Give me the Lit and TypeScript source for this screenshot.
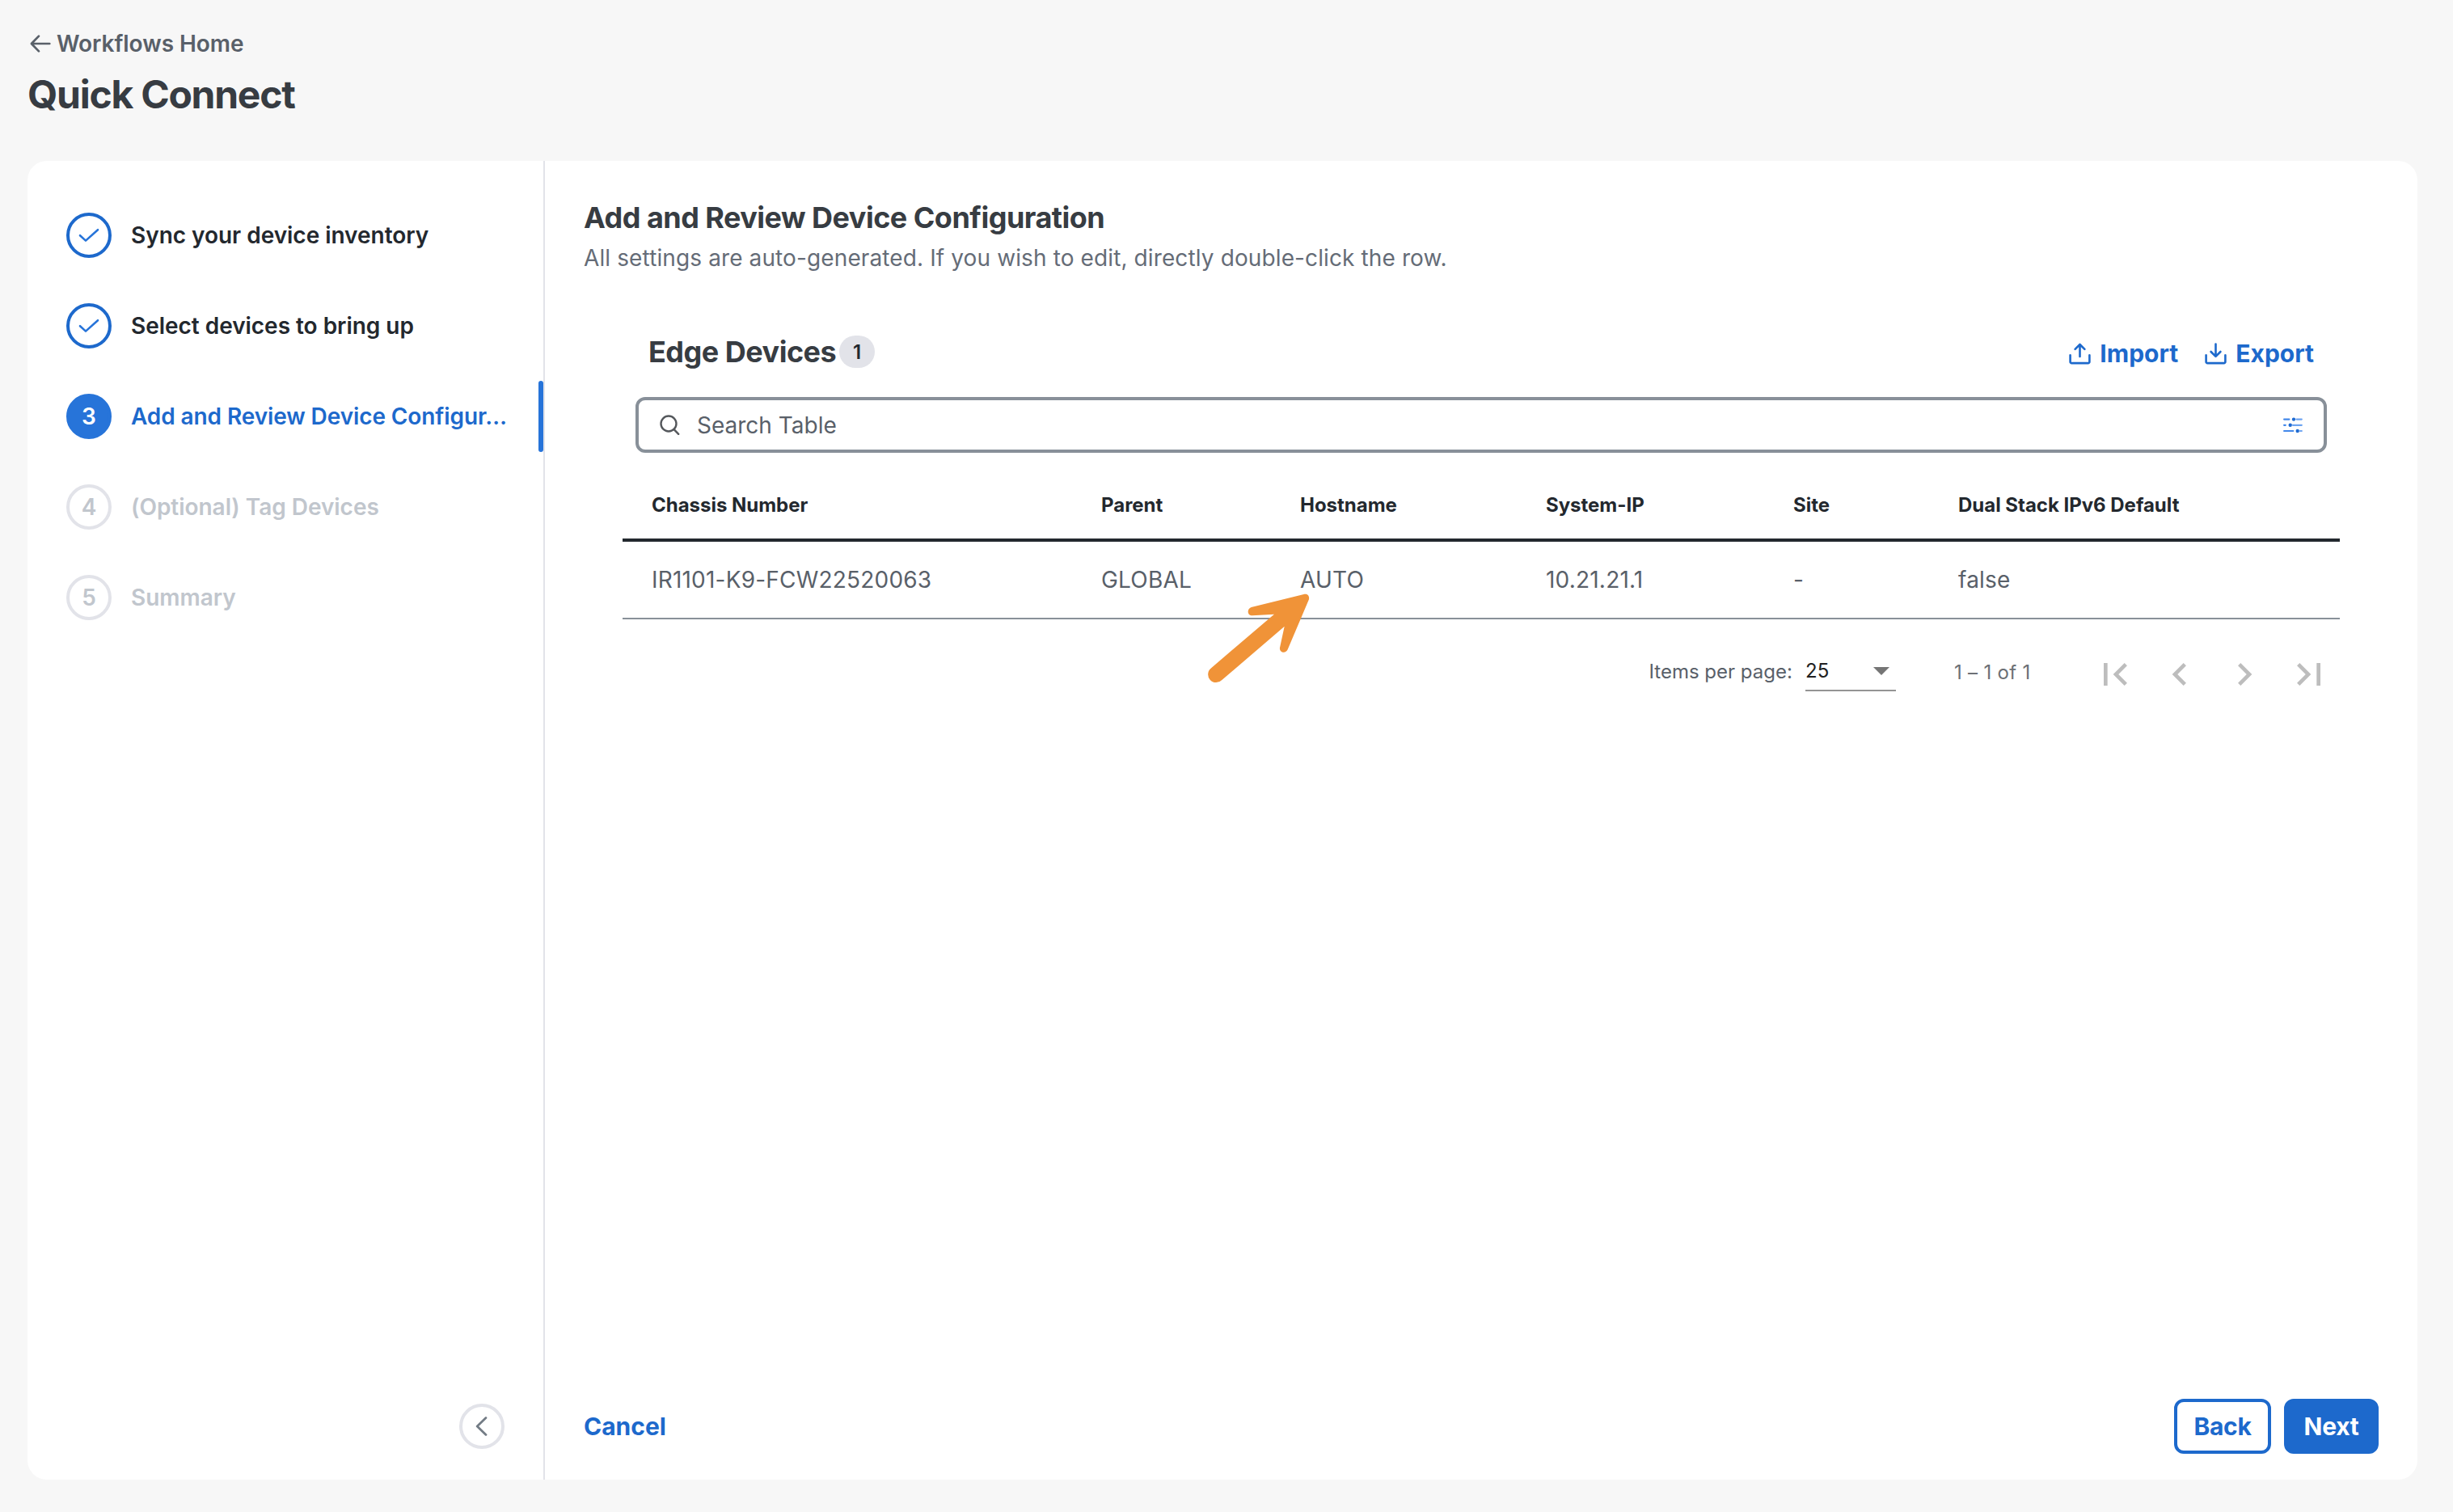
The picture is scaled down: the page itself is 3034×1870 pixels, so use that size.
import { LitElement, html, css, svg, nothing } from "lit";

type StepState = "done" | "active" | "pending";

interface Step {
  label: string;
  state: StepState;
}

const STEPS: Step[] = [
  { label: "Sync your device inventory", state: "done" },
  { label: "Select devices to bring up", state: "done" },
  { label: "Add and Review Device Configur…", state: "active" },
  { label: "(Optional) Tag Devices", state: "pending" },
  { label: "Summary", state: "pending" },
];

const COLUMNS = ["Chassis Number", "Parent", "Hostname", "System-IP", "Site", "Dual Stack IPv6 Default"];
const ROWS = [["IR1101-K9-FCW22520063", "GLOBAL", "AUTO", "10.21.21.1", "-", "false"]];

const PAGE_ICONS = [
  "M18.41 16.59L13.82 12l4.59-4.59L17 6l-6 6 6 6zM6 6h2v12H6z",
  "M15.41 7.41L14 6l-6 6 6 6 1.41-1.41L10.83 12z",
  "M10 6L8.59 7.41 13.17 12l-4.58 4.59L10 18l6-6z",
  "M5.59 7.41L10.18 12l-4.59 4.59L7 18l6-6-6-6zM16 6h2v12h-2z",
];

class StepList extends LitElement {
  static styles = css`
    :host { display: block; }
    .step { display: flex; align-items: center; height: 112px; padding-left: 48px; }
    .bullet {
      box-sizing: border-box; width: 56px; height: 56px; flex: none; border-radius: 50%;
      display: flex; align-items: center; justify-content: center;
      border: 4px solid #e2e3e9; color: #c1c6cd;
    }
    .label { flex: none; width: 474px; margin-left: 24px; white-space: nowrap; color: #c1c6cd; line-height: 40px; }
    .done .bullet { border-color: #1d69cc; }
    .done .label { color: #23282e; }
    .active .bullet { background: #2774d9; border-color: #2774d9; color: #fff; }
    .active .label { color: #1d69cc; letter-spacing: -0.1px; }
    .marker { width: 6px; height: 88px; margin-left: auto; border-radius: 3px; background: #2774d9; }
  `;

  render() {
    return STEPS.map(
      (s, i) => html`<div class="step ${s.state}">
        <div class="bullet">
          ${s.state === "done"
            ? html`<svg width="26" height="18" viewBox="0 0 26 18" fill="none" stroke="#2774d9" stroke-width="2.6" stroke-linecap="round" stroke-linejoin="round"><path d="M2 9.2l7 6.4L24 2.2" /></svg>`
            : i + 1}
        </div>
        <div class="label">${s.label}</div>
        ${s.state === "active" ? html`<div class="marker"></div>` : nothing}
      </div>`
    );
  }
}
customElements.define("step-list", StepList);

class DeviceTable extends LitElement {
  static styles = css`
    :host { display: block; }
    .toolbar { display: flex; align-items: center; height: 60px; margin-left: 32px; margin-right: 32px; }
    .title { width: 231px; white-space: nowrap; font-size: 36px; font-weight: 700; letter-spacing: -0.5px; color: #373c42; }
    .count {
      width: 44px; height: 40px; margin-left: 5px; border-radius: 20px; background: #e2e3e9;
      color: #23282e; font-size: 24px; font-weight: 600; line-height: 41px; text-align: center;
    }
    .actions { display: flex; gap: 33px; margin-left: auto; padding-top: 4px; }
    .action { display: flex; align-items: center; gap: 11px; color: #1d69cc; font-size: 30px; font-weight: 700; line-height: 36px; }
    .search {
      box-sizing: border-box; height: 69px; margin: 26px 16px 0; padding: 0 26px;
      display: flex; align-items: center; border: 4px solid #889099; border-radius: 12px;
    }
    .placeholder { flex: 1; margin-left: 21px; color: #596069; line-height: 36px; }
    .grid { display: grid; grid-template-columns: 556px 246px 304px 306px 204px 1fr; padding-left: 36px; align-items: center; }
    .head { box-sizing: border-box; height: 110px; padding-top: 23px; border-bottom: 4px solid #23282e; }
    .th { font-size: 24px; font-weight: 700; color: #23282e; letter-spacing: -0.02px; line-height: 32px; white-space: nowrap; }
    .row { height: 94px; border-bottom: 2px solid #889099; }
    .td { color: #596069; letter-spacing: 0.2px; line-height: 36px; }
    .pager { display: flex; align-items: center; height: 80px; margin-top: 28px; padding-left: 1269.5px; color: #596069; font-size: 24px; }
    .pager-label { width: 193.5px; padding-bottom: 7px; white-space: nowrap; }
    .select {
      box-sizing: border-box; width: 112px; height: 49px; display: flex; align-items: center;
      justify-content: space-between; padding-right: 8px; margin-top: -7px;
      border-bottom: 2px solid #949494; color: #212121;
    }
    .range { flex: none; width: 159px; margin-left: 72px; padding-bottom: 6px; color: #6c7075; letter-spacing: 0.3px; white-space: nowrap; }
    .pages { display: flex; margin-right: -2px; }
    .page { flex: none; width: 80px; height: 80px; display: flex; align-items: center; justify-content: center; }
  `;

  private arrowIcon(up: boolean) {
    return html`<svg width="27" height="27" viewBox="0 0 27 27" fill="none" stroke="currentColor" stroke-width="2.6" stroke-linecap="round" stroke-linejoin="round">
      <path d="M1.6 15.2v8.2a1.7 1.7 0 0 0 1.7 1.7h20.4a1.7 1.7 0 0 0 1.7-1.7v-8.2" />
      ${up ? svg`<path d="M13.5 17V2M7.6 7.9L13.5 2l5.9 5.9" />` : svg`<path d="M13.5 1.6v15.2M7.6 11l5.9 5.9L19.4 11" />`}
    </svg>`;
  }

  render() {
    return html`
      <div class="toolbar">
        <div class="title">Edge Devices</div>
        <div class="count">1</div>
        <div class="actions">
          <div class="action">${this.arrowIcon(true)}<span>Import</span></div>
          <div class="action">${this.arrowIcon(false)}<span>Export</span></div>
        </div>
      </div>
      <div class="search">
        <svg width="25" height="25" viewBox="0 0 25 25" fill="none" stroke="#55585c" stroke-width="2.4" stroke-linecap="round">
          <circle cx="11" cy="11" r="9.5" /><path d="M17.4 17.8l5.8 6" />
        </svg>
        <div class="placeholder">Search Table</div>
        <svg width="24" height="20" viewBox="0 0 24 20" fill="none" stroke-width="2.2" stroke-linecap="round">
          <path stroke="#4388ea" d="M1.1 2.6h6.3M1.1 9.8h1.7M1.1 17h11.2" />
          <path stroke="#6ea4f1" d="M16.5 2.6h6.3M12 9.8h10.8M21 17h1.8" />
          <g fill="#1f6bd2"><circle cx="13" cy="2.6" r="2.2" /><circle cx="8.7" cy="9.8" r="2.2" /><circle cx="17.7" cy="17" r="2.2" /></g>
        </svg>
      </div>
      <div class="grid head">${COLUMNS.map((c) => html`<div class="th">${c}</div>`)}</div>
      ${ROWS.map((r) => html`<div class="grid row">${r.map((c) => html`<div class="td">${c}</div>`)}</div>`)}
      <div class="pager">
        <div class="pager-label">Items per page:</div>
        <div class="select">
          <span>25</span>
          <svg width="20" height="10" viewBox="0 0 20 10"><path d="M0 0h20L10 10z" fill="#757575" /></svg>
        </div>
        <div class="range">1 – 1 of 1</div>
        <div class="pages">
          ${PAGE_ICONS.map((d) => html`<div class="page"><svg width="56" height="56" viewBox="0 0 24 24" fill="#bdbdbd"><path d=${d} /></svg></div>`)}
        </div>
      </div>
    `;
  }
}
customElements.define("device-table", DeviceTable);

class AppRoot extends LitElement {
  static styles = css`
    :host {
      box-sizing: border-box; display: flex; flex-direction: column; width: 100%; height: 1870px;
      padding: 34px 44px 40px 34px; overflow: hidden; position: relative; background: #f7f7f7;
      font-family: Inter, "Liberation Sans", sans-serif; font-size: 28px; color: #23282e;
    }
    .crumb { display: flex; align-items: center; gap: 7px; height: 40px; padding-left: 3px; font-weight: 600; letter-spacing: -0.05px; color: #596069; }
    .page-title { margin-top: 13px; height: 60px; line-height: 60px; font-size: 48px; font-weight: 700; letter-spacing: -1.25px; color: #373c42; }
    .card { display: flex; flex: 1; margin-top: 52px; border-radius: 24px; background: #fff; overflow: hidden; }
    .side {
      box-sizing: border-box; width: 640px; flex: none; display: flex; flex-direction: column; padding-top: 36px;
      border-right: 2px solid #e2e3e9; font-weight: 600; letter-spacing: -0.03px;
    }
    .collapse {
      box-sizing: border-box; width: 56px; height: 56px; margin: auto 48px 38px auto; border: 4px solid #e2e3e9;
      border-radius: 50%; display: flex; align-items: center; justify-content: center; padding-right: 2px;
    }
    .main { box-sizing: border-box; flex: 1; min-width: 0; display: flex; flex-direction: column; padding: 48px 48px 32px; }
    .heading { line-height: 45px; font-size: 36px; font-weight: 700; letter-spacing: -0.52px; color: #373c42; }
    .sub { margin-top: 9px; line-height: 36px; letter-spacing: 0.115px; color: #656c77; }
    .devices { margin: 68px 48px 0; }
    .footer { display: flex; align-items: center; gap: 16px; margin-top: auto; font-size: 30px; font-weight: 700; color: #1d69cc; }
    .cancel { margin-right: auto; }
    .btn {
      box-sizing: border-box; height: 68px; display: flex; align-items: center; justify-content: center;
      border: 4px solid #1d69cc; border-radius: 12px; letter-spacing: -0.3px;
    }
    .back { width: 120px; }
    .next { width: 117px; background: #1d69cc; color: #fff; }
    .pointer { position: absolute; left: 1480px; top: 720px; }
  `;

  render() {
    return html`
      <div class="crumb">
        <svg width="26" height="24" viewBox="0 0 26 24" fill="none" stroke="currentColor" stroke-width="2.7" stroke-linecap="round" stroke-linejoin="round">
          <path d="M24.3 12H2M11 2.6L1.9 12l9.1 9.4" />
        </svg>
        <span>Workflows Home</span>
      </div>
      <div class="page-title">Quick Connect</div>
      <div class="card">
        <div class="side">
          <step-list></step-list>
          <div class="collapse">
            <svg width="15" height="24" viewBox="0 0 15 24" fill="none" stroke="#737c85" stroke-width="2.8" stroke-linecap="round" stroke-linejoin="round"><path d="M13 1.6L2.2 12 13 22.4" /></svg>
          </div>
        </div>
        <div class="main">
          <div class="heading">Add and Review Device Configuration</div>
          <div class="sub">All settings are auto-generated. If you wish to edit, directly double-click the row.</div>
          <device-table class="devices"></device-table>
          <div class="footer">
            <div class="cancel">Cancel</div>
            <div class="btn back">Back</div>
            <div class="btn next">Next</div>
          </div>
        </div>
      </div>
      <svg class="pointer" width="160" height="140" viewBox="0 0 480 420" fill="#f09338">
        <path d="M55 318L288 119L207 124C187 124 186 99 203 93L398 45C412 42 421 53 416 66L338 250C331 267 306 262 309 243L326 164L94 363A29.9 29.9 0 1 1 55 318Z" />
      </svg>
    `;
  }
}
customElements.define("app-root", AppRoot);
